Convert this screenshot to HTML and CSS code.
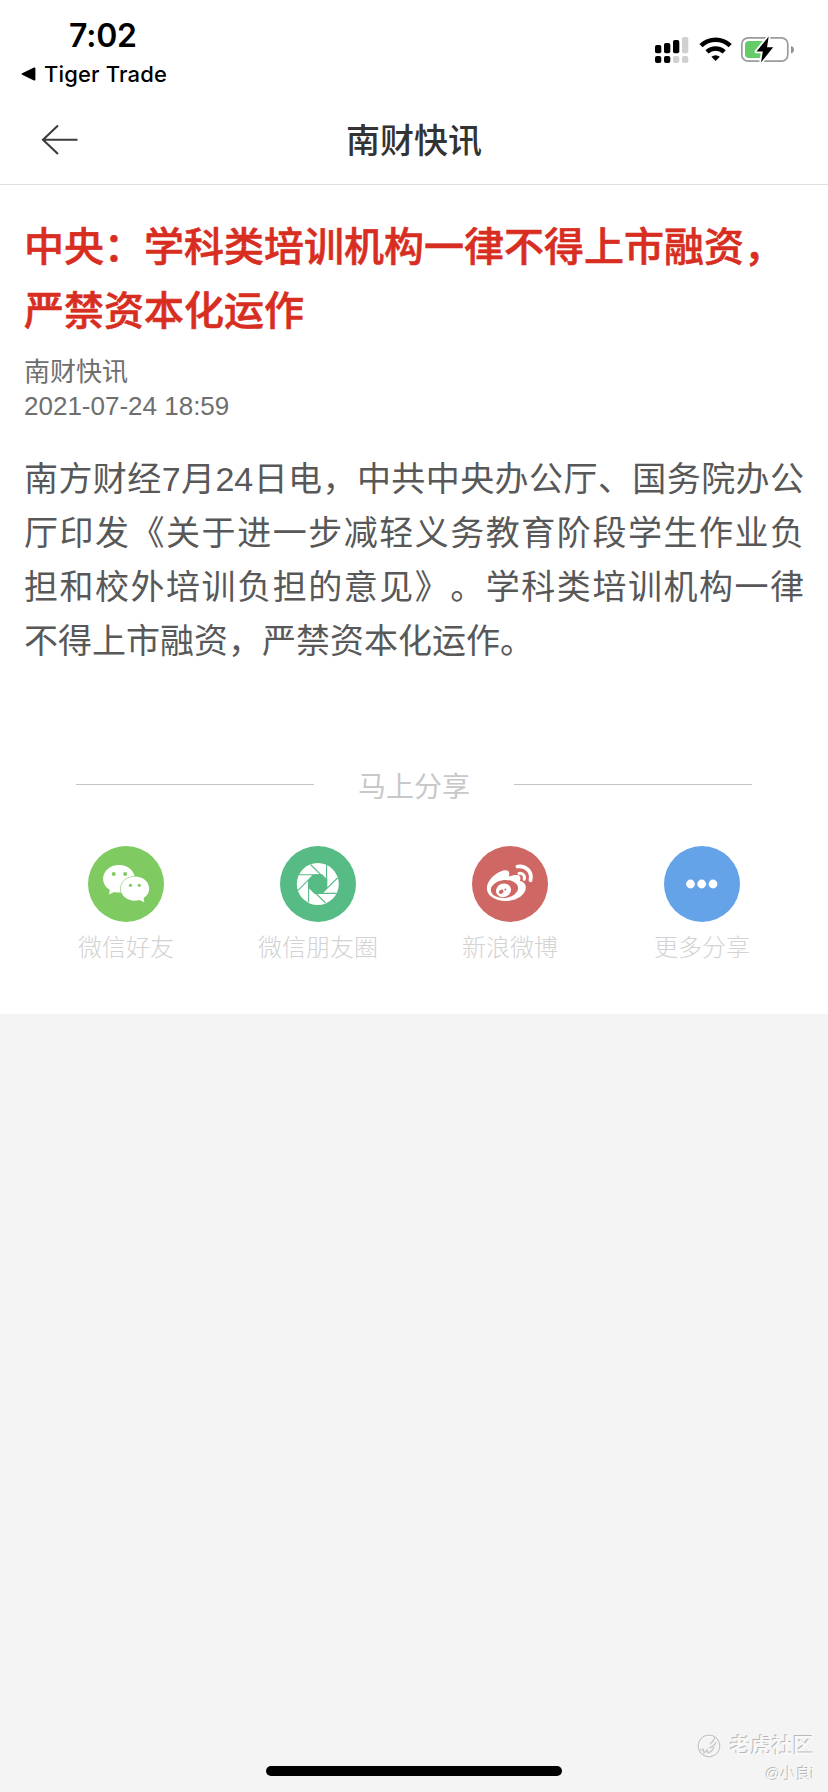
FILE: index.html
```html
<!DOCTYPE html>
<html lang="zh-CN">
<head>
<meta charset="utf-8">
<title>南财快讯</title>
<link rel="stylesheet" href="styles.css">
</head>
<body>
<div class="screen">
  <div class="status">
    <div class="status-left">
      <div class="time">7:02</div>
      <div class="back-app">
        <svg width="15" height="14" viewBox="0 0 15 14"><path d="M1.2 6.2 13 .6q1.4-.5 1.4 1v10.8q0 1.5-1.4 1L1.2 7.8q-1.3-.8 0-1.6z"/></svg>
        <span>Tiger Trade</span>
      </div>
    </div>
    <svg class="status-icons" width="142" height="28" viewBox="654 36 142 28">
      <rect x="655" y="45" width="6.3" height="8.3" rx="1.8"/>
      <rect x="664" y="43" width="6.3" height="10.3" rx="1.8"/>
      <rect x="673" y="40" width="6.3" height="13.3" rx="1.8"/>
      <rect x="682" y="37" width="6.3" height="16.3" rx="1.8" fill="#d0d0d0"/>
      <rect x="655" y="56" width="6.3" height="7" rx="2"/>
      <rect x="664" y="56" width="6.3" height="7" rx="2"/>
      <rect x="673" y="56" width="6.3" height="7" rx="2" fill="#d0d0d0"/>
      <rect x="682" y="56" width="6.3" height="7" rx="2" fill="#d0d0d0"/>
      <path d="M701 45.600a21 21 0 0 1 29.200 0M707 51.800a12.600 12.600 0 0 1 17.200 0" fill="none" stroke="#000" stroke-width="4.500"/>
      <path d="M711.400 56.800a6.200 6.200 0 0 1 8.400 0L715.600 61z"/>
      <rect x="741.800" y="37.800" width="46" height="23.400" rx="6.500" fill="none" stroke="#9b9b9b" stroke-width="1.700"/>
      <path d="M749 41h15v17h-15q-4 0-4-4v-9q0-4 4-4z" fill="#63cb67"/>
      <path d="M791 46q3 .8 3 3.700t-3 3.700z" fill="#929292"/>
      <path d="M768.700 36.600 756.500 51.500h6.300l-1.800 11 12.200-15.300h-6.200z" stroke="#fff" stroke-width="3.600" stroke-linejoin="round" paint-order="stroke"/>
    </svg>
  </div>

  <header class="nav">
    <svg class="nav-back" width="38" height="32" viewBox="0 0 38 32"><path d="M36.500 15.700H3M17 1.500 2 15.700 17 30" fill="none" stroke="#3e3b3d" stroke-width="2.100"/></svg>
    <h1 class="nav-title">南财快讯</h1>
  </header>

  <article class="article">
    <h2 class="headline">中央：学科类培训机构一律不得上市融资，严禁资本化运作</h2>
    <div class="meta">
      <div>南财快讯</div>
      <div>2021-07-24 18:59</div>
    </div>
    <p class="content">南方财经7月24日电，中共中央办公厅、国务院办公厅印发《关于进一步减轻义务教育阶段学生作业负担和校外培训负担的意见》。学科类培训机构一律不得上市融资，严禁资本化运作。</p>
  </article>

  <section class="share">
    <div class="share-heading"><span>马上分享</span></div>
    <div class="share-list">
      <div class="share-item">
        <svg width="76" height="76" viewBox="0 0 76 76">
          <circle cx="38" cy="38" r="38" fill="#7fcb62"/>
          <path d="M31 19c8.800 0 16 6.200 16 13.800S39.800 46.600 31 46.600c-1.700 0-3.300-.2-4.800-.6L21 48.500l.8-4.600c-4.100-2.500-6.700-6.500-6.700-11.100C15.100 25.200 22.200 19 31 19z" fill="#fff"/>
          <path d="M47 30.600c7.900 0 14.200 5.400 14.200 12.100 0 4-2.200 7.300-5.600 9.400l.7 4.100-4.900-2.100c-1.400.4-2.900.6-4.400.6-7.900 0-14.300-5.400-14.300-12S39.100 30.600 47 30.600z" fill="#fff" stroke="#7fcb62" stroke-width="1.200" paint-order="stroke"/>
          <g fill="#7fcb62"><circle cx="25.700" cy="28" r="2"/><circle cx="37.200" cy="28" r="2"/><circle cx="42.500" cy="39.300" r="1.600"/><circle cx="51.300" cy="39.300" r="1.600"/></g>
        </svg>
        <span>微信好友</span>
      </div>
      <div class="share-item">
        <svg width="76" height="76" viewBox="0 0 76 76">
          <circle cx="38" cy="38" r="38" fill="#57bb86"/>
          <circle cx="37.800" cy="38" r="21" fill="#fff"/>
          <path d="M33.500 28.600h8.800l4.900 5v8.800l-5.400 5.400h-7.400l-6-6v-7.600z" fill="#57bb86"/>
          <path d="M30.500 18.500 47.200 35.200M46.600 18v24.500M57.500 32 41.800 47.300M56.500 47.400H35M45.500 57 28.500 40M28.600 56V33.500M18 44.300 33.700 28.600M19 28.800H42" fill="none" stroke="#57bb86" stroke-width="1.100"/>
        </svg>
        <span>微信朋友圈</span>
      </div>
      <div class="share-item">
        <svg width="76" height="76" viewBox="0 0 76 76">
          <circle cx="38" cy="38" r="38" fill="#cf6864"/>
          <path d="M35 24.500c2.500.5 2.800 3 1.800 6 4.500-1.700 9.800-2.400 11.200 0 .8 1.400.4 3-.2 4.600 4 .8 6.200 3.300 6 6.700C53.400 49 45 55 33.500 55 23 55 14.900 49.600 14.900 42.600c0-5 3.100-9.500 7.200-13 4.500-3.800 9.600-5.800 12.900-5.100z" fill="#fff"/>
          <ellipse cx="32.500" cy="43" rx="13.700" ry="9" transform="rotate(-6 32.500 43)" fill="#cf6864"/>
          <ellipse cx="31.500" cy="44.300" rx="7.600" ry="6.700" transform="rotate(-22 31.500 44.300)" fill="#fff"/>
          <ellipse cx="29.200" cy="45.700" rx="2.500" ry="2" transform="rotate(-25 29.200 45.700)" fill="#cf6864"/>
          <circle cx="33.300" cy="43.500" r="1" fill="#cf6864"/>
          <path d="M45.500 20.500c8.300-1.400 15 5.300 13 13.700" fill="none" stroke="#fff" stroke-width="3.800" stroke-linecap="round"/>
          <path d="M47 27.400c3.600-.5 6.300 2.300 5.200 6" fill="none" stroke="#fff" stroke-width="3" stroke-linecap="round"/>
        </svg>
        <span>新浪微博</span>
      </div>
      <div class="share-item">
        <svg width="76" height="76" viewBox="0 0 76 76">
          <circle cx="38" cy="38" r="38" fill="#65a3e8"/>
          <g fill="#fff"><circle cx="26.500" cy="38" r="4.400"/><circle cx="37.700" cy="38" r="4.400"/><circle cx="49" cy="38" r="4.400"/></g>
        </svg>
        <span>更多分享</span>
      </div>
    </div>
  </section>

  <footer class="footer">
    <div class="home-bar"></div>
    <div class="watermark">
      <div class="brand">
        <svg width="24" height="24" viewBox="0 0 24 24" fill="none" stroke="#c6c6c6" stroke-width="1.300"><circle cx="12" cy="12" r="10.800" stroke="#fff" stroke-width="2.400"/><circle cx="12" cy="12" r="10.800"/><path d="M18 3c-1 3-2 5-5 7M19 8c-1 4-4 5-7 6M3 16l3-1 1 4 3-3 1 3c3-1 5-3 6-6"/></svg>
        <span>老虎社区</span>
      </div>
      <div class="author">@小良i</div>
    </div>
  </footer>
</div>
</body>
</html>
```
FILE: styles.css
```css
* {
  box-sizing: border-box;
  margin: 0;
  padding: 0;
}

body {
  background: #f4f4f4;
  font-family: "Liberation Sans", "Noto Sans CJK SC", sans-serif;
  text-spacing-trim: space-all;
}

svg {
  display: block;
  flex: none;
}

.screen {
  width: 828px;
  height: 1792px;
  display: flex;
  flex-direction: column;
  overflow: hidden;
}

.status {
  height: 96px;
  background: #fff;
  display: flex;
  justify-content: space-between;
  padding: 16px 32px 0 21px;
  font-family: Inter, sans-serif;
  color: #000;
}

.time {
  padding-left: 48px;
  font-size: 32px;
  line-height: 40px;
  font-weight: 600;
  letter-spacing: -0.2px;
}

.back-app {
  display: flex;
  align-items: center;
  gap: 8px;
  font-size: 22px;
  line-height: 36px;
  font-weight: 500;
  letter-spacing: 0.15px;
}

.status-icons {
  margin-top: 20px;
}

.nav {
  height: 89px;
  background: #fff;
  border-bottom: 1px solid #e0e0e0;
  display: grid;
  grid-template-columns: 1fr auto 1fr;
  align-items: center;
  padding: 0 41px 0;
}

.nav-title {
  margin-bottom: 3px;
  font-family: "Noto Sans CJK SC", sans-serif;
  font-size: 34px;
  line-height: 50px;
  font-weight: 500;
  color: #333;
}

.article {
  background: #fff;
  padding: 27px 24px 0;
}

.headline {
  font-family: "Noto Sans CJK SC", sans-serif;
  font-size: 40px;
  line-height: 64px;
  font-weight: 500;
  color: #d82e22;
  -webkit-text-stroke: 0.6px #d82e22;
}

.meta {
  padding-top: 15px;
  font-size: 26px;
  line-height: 34px;
  color: #6e6e6e;
}

.content {
  padding-top: 29px;
  font-size: 34px;
  line-height: 54px;
  color: #585858;
  text-align: justify;
}

.share {
  height: 346px;
  background: #fff;
  padding: 97px 30px 0;
}

.share-heading {
  display: flex;
  align-items: center;
  justify-content: center;
  gap: 44px;
  height: 40px;
  font-size: 28px;
  color: #c8c8c8;
}

.share-heading::before,
.share-heading::after {
  content: "";
  width: 238px;
  height: 1px;
  margin-bottom: 2px;
  background: #c4c4c4;
}

.share-list {
  display: grid;
  grid-template-columns: repeat(4, 192px);
  margin-top: 41px;
}

.share-item {
  display: flex;
  flex-direction: column;
  align-items: center;
  gap: 6px;
  font-size: 24px;
  line-height: 36px;
  font-weight: 300;
  font-family: "Noto Sans CJK SC", sans-serif;
  color: #d2d2d2;
}

.footer {
  flex: 1;
  display: grid;
  grid-template-columns: 1fr 296px 1fr;
  align-items: end;
}

.home-bar {
  grid-column: 2;
  height: 10px;
  margin-bottom: 16px;
  border-radius: 5px;
  background: #000;
}

.watermark {
  display: flex;
  flex-direction: column;
  align-items: flex-end;
  padding: 0 14px 5px 0;
  color: #f8f8f8;
  text-shadow: -1px -1px 0 #b8b8b8;
}

.brand {
  display: flex;
  align-items: center;
  gap: 9px;
  font-size: 21px;
  line-height: 30px;
  font-weight: 700;
}

.author {
  font-size: 15px;
  line-height: 26px;
}
```
